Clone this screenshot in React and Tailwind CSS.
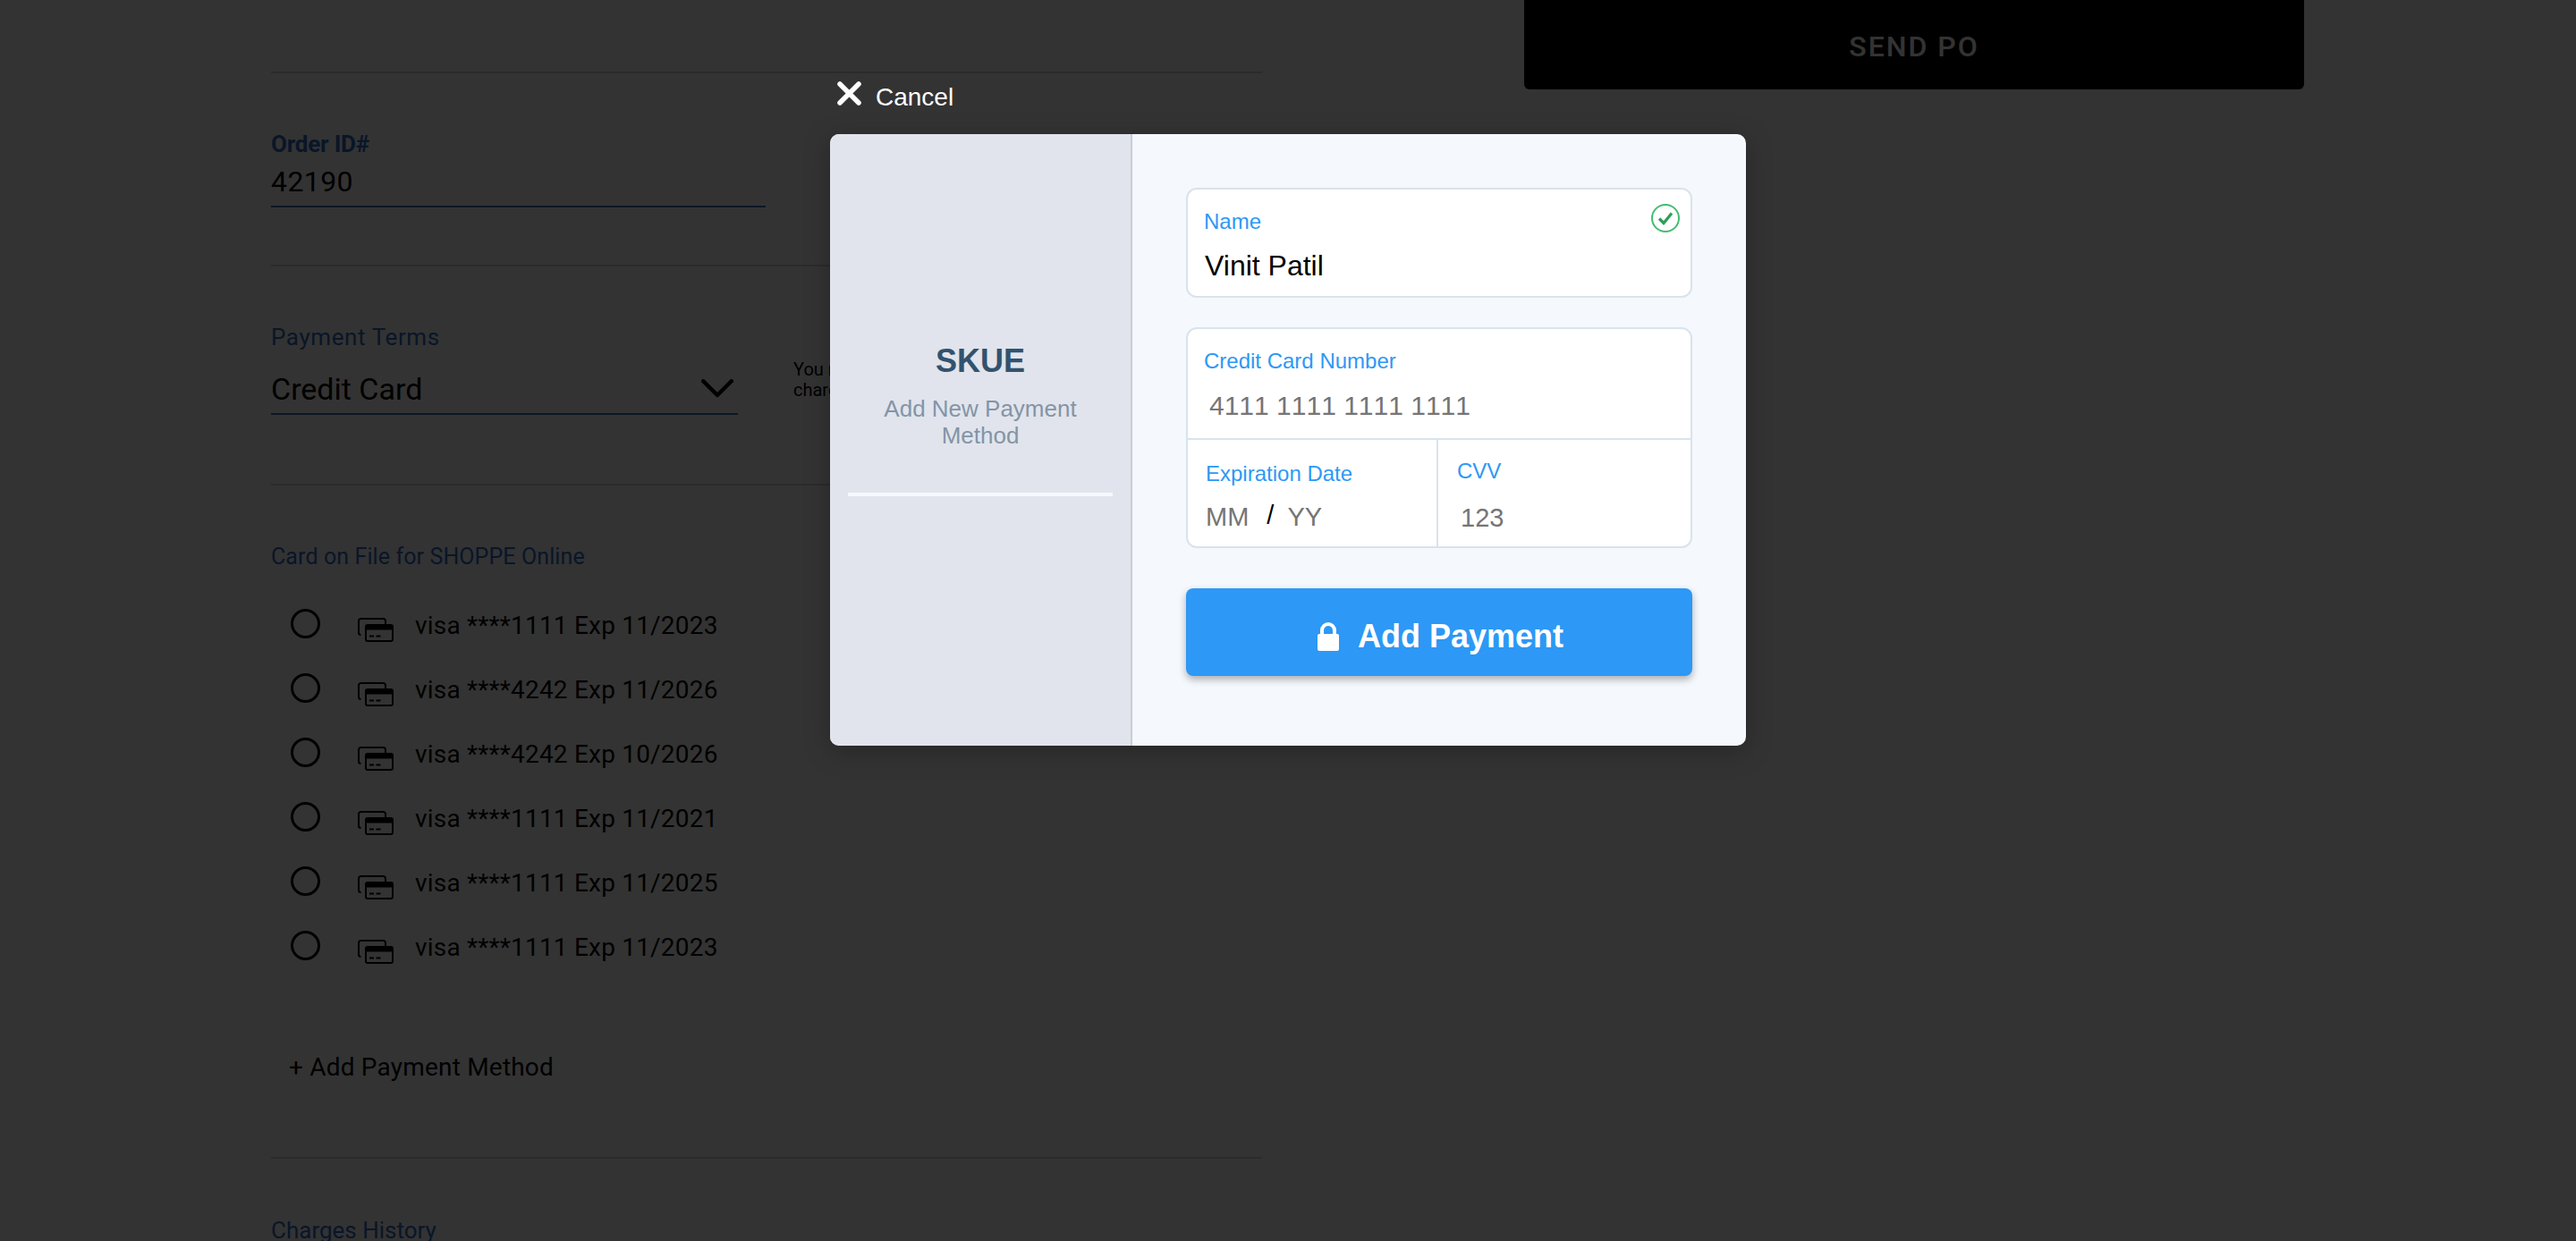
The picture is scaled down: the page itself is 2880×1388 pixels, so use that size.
const cards = [
  "visa ****1111 Exp 11/2023",
  "visa ****4242 Exp 11/2026",
  "visa ****4242 Exp 10/2026",
  "visa ****1111 Exp 11/2021",
  "visa ****1111 Exp 11/2025",
  "visa ****1111 Exp 11/2023",
];

function CardsIcon() {
  return (
    <svg width="40" height="27" viewBox="0 0 40 27" fill="none" className="block">
      <path d="M3.5 19 A2.5 2.5 0 0 1 1 16.5 V3.5 A2.5 2.5 0 0 1 3.5 1 H28.5 A2.5 2.5 0 0 1 31 3.5 V7" stroke="#000" strokeWidth="2" />
      <rect x="9" y="8" width="30" height="18" rx="2" stroke="#000" strokeWidth="2" fill="#fff" />
      <rect x="9" y="8" width="30" height="5.5" fill="#000" />
      <path d="M13 20.5 H18 M20.5 20.5 H25.5" stroke="#000" strokeWidth="2" />
    </svg>
  );
}

function OrderColumn() {
  return (
    <div className="w-[1108px] shrink-0 font-['Roboto',sans-serif] text-black">
      <div className="h-[2px] mt-[80px] bg-[#d6d6d6]" />

      <div className="mt-[64px] h-[30px] leading-[30px] text-[26px] font-bold text-[#2f6fc9] tracking-[-0.2px]">Order ID#</div>
      <div className="mt-[7px] w-[553px] h-[49px] leading-[40px] text-[32px] border-b-2 border-[#3c6fc0] tracking-[0.4px]">42190</div>

      <div className="h-[2px] mt-[64px] bg-[#d6d6d6]" />

      <div className="mt-[64px] h-[30px] leading-[30px] text-[26px] text-[#2f6fc9] tracking-[0.6px]">Payment Terms</div>
      <div className="flex">
        <div className="mt-[23px] w-[522px] h-[49px] leading-[40px] text-[34px] border-b-2 border-[#3c6fc0] flex justify-between pr-[5px]">
          <span>Credit Card</span>
          <svg width="36" height="21" viewBox="0 0 36 21" fill="none" className="mt-[9px]">
            <path d="M2.25 2.25 L18 18 L33.75 2.25" stroke="#000" strokeWidth="4.5" strokeLinecap="round" strokeLinejoin="round" />
          </svg>
        </div>
        <div className="ml-[62px] mt-[10px] w-[200px] text-[20px] leading-[23px]">
          You may be
          <br />
          charged
        </div>
      </div>

      <div className="h-[2px] mt-[77px] bg-[#d6d6d6]" />

      <div className="mt-[65px] h-[30px] leading-[30px] text-[25px] tracking-[0.1px] text-[#2f6fc9]">Card on File for SHOPPE Online</div>

      <div className="mt-[23px] flex flex-col">
        {cards.map((c, i) => (
          <div key={i} className="h-[72px] flex items-start pl-[22px]">
            <div className="w-[33px] h-[33px] rounded-full border-[3px] border-black mt-[20px] box-border" />
            <div className="ml-[42px] mt-[30px]"><CardsIcon /></div>
            <div className="ml-[24px] mt-[19px] text-[28px] tracking-[0.2px] leading-[40px]">{c}</div>
          </div>
        ))}
      </div>

      <div className="mt-[81px] pl-[20px] h-[40px] leading-[40px] text-[28px] tracking-[0.2px]">+ Add Payment Method</div>

      <div className="h-[2px] mt-[80px] bg-[#d6d6d6]" />

      <div className="mt-[65px] h-[30px] leading-[30px] text-[26px] text-[#2f6fc9]">Charges History</div>
    </div>
  );
}

function PaymentModal() {
  return (
    <div className="absolute inset-0 bg-black/80 pl-[928px] font-['Liberation_Sans',sans-serif]">
      <div className="h-[150px] w-[1024px] flex pt-[91px] pl-[8px]">
        <svg width="27" height="27" viewBox="0 0 27 27" fill="none" className="shrink-0">
          <path d="M3 3 L24 24 M24 3 L3 24" stroke="#fff" strokeWidth="5.5" strokeLinecap="round" />
        </svg>
        <span className="ml-[16px] mt-[1px] text-[28px] leading-[34px] text-white">Cancel</span>
      </div>

      <div className="w-[1024px] h-[684px] flex rounded-[10px] overflow-hidden shadow-[0_6px_30px_rgba(0,0,0,0.25)] bg-[#f5f8fd]">
        <div className="w-[338px] shrink-0 bg-[#e1e4ec] border-r-2 border-[#c6ced9] px-[20px] pt-[233px] text-center">
          <div className="h-[42px] leading-[42px] text-[36px] font-bold text-[#32526e]">SKUE</div>
          <div className="mt-[17px] text-[26px] leading-[30px] text-[#8494a6]">
            Add New Payment
            <br />
            Method
          </div>
          <div className="mt-[49px] h-[4px] bg-[#f5f8fd]" />
        </div>

        <div className="flex-1 pl-[60px] pt-[60px]">
          <div className="relative w-[566px] h-[123px] bg-white border-2 border-[#d9e3ed] rounded-[12px] pl-[18px] pt-[22px]">
            <div className="h-[28px] leading-[28px] text-[24px] text-[#2d98f5]">Name</div>
            <div className="mt-[17px] ml-[1px] h-[36px] leading-[36px] text-[32px] text-black">Vinit Patil</div>
            <svg width="32" height="32" viewBox="0 0 32 32" fill="none" className="absolute right-[12px] top-[16px]">
              <circle cx="16" cy="16" r="15" stroke="#43bd70" strokeWidth="2" />
              <path d="M9 16.5 L14 21.5 L23 10.5" stroke="#2f9e58" strokeWidth="3.2" />
            </svg>
          </div>

          <div className="mt-[33px] w-[566px] h-[247px] bg-white border-2 border-[#d9e3ed] rounded-[12px] flex flex-col">
            <div className="h-[124px] border-b-2 border-[#d9e3ed] pl-[18px] pt-[22px] shrink-0">
              <div className="h-[28px] leading-[28px] text-[24px] text-[#2d98f5]">Credit Card Number</div>
              <div className="mt-[18px] ml-[6px] h-[36px] leading-[36px] text-[30px] [font-kerning:none] text-[#757575]">4111 1111 1111 1111</div>
            </div>
            <div className="flex flex-1">
              <div className="w-[280px] shrink-0 border-r-2 border-[#d9e3ed] pl-[20px] pt-[24px]">
                <div className="h-[28px] leading-[28px] text-[24px] text-[#2d98f5]">Expiration Date</div>
                <div className="mt-[16px] flex h-[36px] leading-[36px] text-[29px] text-[#757575]">
                  <span>MM</span>
                  <span className="ml-[20px] -mt-[2px] text-black">/</span>
                  <span className="ml-[15px]">YY</span>
                </div>
              </div>
              <div className="flex-1 pl-[21px] pt-[21px]">
                <div className="h-[28px] leading-[28px] text-[24px] text-[#2d98f5]">CVV</div>
                <div className="mt-[20px] ml-[4px] h-[36px] leading-[36px] text-[29px] text-[#757575]">123</div>
              </div>
            </div>
          </div>

          <div className="mt-[45px] w-[566px] h-[98px] rounded-[8px] bg-[#2d98f5] shadow-[0_4px_8px_rgba(0,0,0,0.3)] flex items-center justify-center pt-[10px] pl-[3px]">
            <svg width="24" height="32" viewBox="0 0 24 32" className="shrink-0">
              <path d="M5 14 V9 A7 7 0 0 1 19 9 V14" fill="none" stroke="#fff" strokeWidth="4" />
              <rect x="0" y="13" width="24" height="19" rx="2" fill="#fff" />
            </svg>
            <span className="ml-[21px] text-[36px] font-bold leading-[42px] text-white">Add Payment</span>
          </div>
        </div>
      </div>
    </div>
  );
}

export default function App() {
  return (
    <div className="relative w-[2880px] h-[1388px] overflow-hidden bg-white">
      <div className="flex pl-[303px]">
        <OrderColumn />
        <div className="ml-[293px] w-[872px] h-[100px] shrink-0 bg-black rounded-b-[6px] flex items-center justify-center pt-[4px] font-['Roboto',sans-serif] font-medium text-[32px] tracking-[2px] text-white">
          SEND PO
        </div>
      </div>
      <PaymentModal />
    </div>
  );
}
